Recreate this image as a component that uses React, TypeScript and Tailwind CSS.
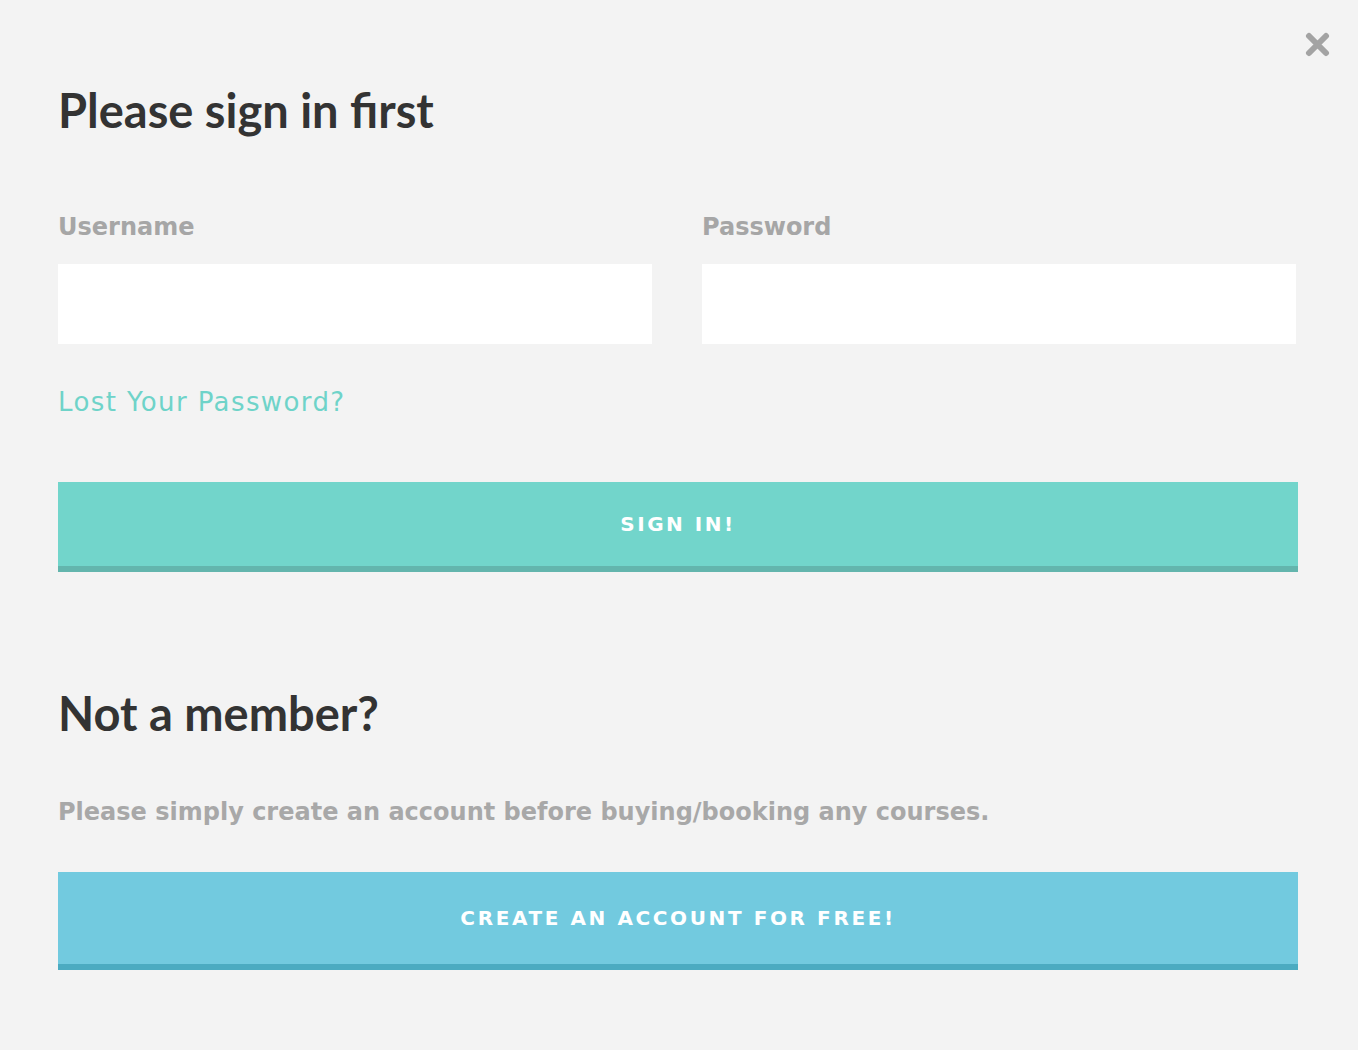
import React from 'react';

const heading = "font-['Lato',sans-serif] font-bold text-[#333333]";
const body = "font-['DejaVu_Sans',sans-serif]";

const SignInModal: React.FC = () => {
  return (
    <div className="relative min-h-[1050px] w-full bg-[#f3f3f3] pl-[58px] pr-[60px] pt-[83px]">
      {/* close */}
      <button className="absolute right-[28px] top-[32px] h-[25px] w-[25px]" aria-label="close">
        <svg viewBox="0 0 25 25" className="h-[25px] w-[25px]">
          <path d="M4 4 L21 21 M21 4 L4 21" stroke="#a3a3a3" strokeWidth="6" strokeLinecap="round" />
        </svg>
      </button>

      <h1 className={`${heading} text-[47px] leading-[54px]`}>Please sign in first</h1>

      {/* Felder */}
      <div className="mt-[76px] grid grid-cols-2 gap-[50px] pr-[2px]">
        <div>
          <label className={`${body} block text-[24px] font-bold leading-[28px] text-[#a6a6a6]`}>Username</label>
          <input className="mt-[23px] block h-[80px] w-full bg-white outline-none" />
        </div>
        <div>
          <label className={`${body} block text-[24px] font-bold leading-[28px] text-[#a6a6a6]`}>Password</label>
          <input type="password" className="mt-[23px] block h-[80px] w-full bg-white outline-none" />
        </div>
      </div>

      <a className={`${body} mt-[42px] block text-[26px] leading-[32px] tracking-[1.4px] text-[#6fd3c9]`}>Lost Your Password?</a>

      <button className={`${body} mt-[64px] flex h-[90px] w-full items-center justify-center border-b-[6px] border-[#63b5ad] bg-[#72d5cb] text-[20px] font-bold tracking-[2.5px] text-white`}>
        SIGN IN!
      </button>

      <h2 className={`${heading} mt-[114px] text-[47px] leading-[54px]`}>Not a member?</h2>

      <p className={`${body} mt-[56px] text-[24px] font-bold leading-[32px] text-[#a8a8a8]`}>
        Please simply create an account before buying/booking any courses.
      </p>

      <button className={`${body} mt-[44px] flex h-[98px] w-full items-center justify-center border-b-[6px] border-[#4babc1] bg-[#72cadf] text-[20px] font-bold tracking-[2.6px] text-white`}>
        CREATE AN ACCOUNT FOR FREE!
      </button>
    </div>
  );
};

export default SignInModal;
